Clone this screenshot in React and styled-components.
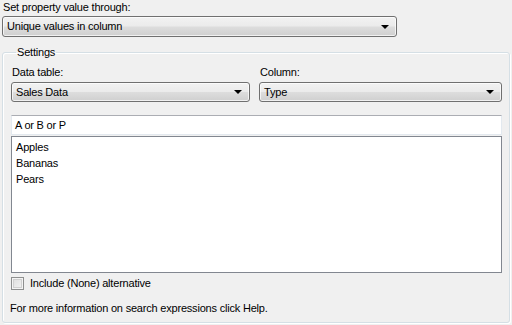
import React from 'react';
import styled, { createGlobalStyle } from 'styled-components';

const GlobalStyle = createGlobalStyle`
  html, body {
    margin: 0;
    padding: 0;
    background: #f0f0f0;
  }
  body {
    font-family: "Liberation Sans", Arial, sans-serif;
    font-size: 11px;
    letter-spacing: -0.2px;
    color: #000;
  }
`;

const Page = styled.div`
  width: 512px;
  height: 325px;
  box-sizing: border-box;
  padding: 1px 2px 0 2px;
  background: #f0f0f0;
  display: flex;
  flex-direction: column;
`;

const Label = styled.div`
  line-height: 13px;
  height: 13px;
  padding-left: ${(p) => p.indent || 1}px;
  white-space: nowrap;
`;

const Combo = styled.div`
  box-sizing: border-box;
  width: ${(p) => p.width || '100%'};
  height: ${(p) => p.height || 20}px;
  margin-top: ${(p) => p.top || 3}px;
  border: 1px solid #707070;
  border-radius: 3px;
  background: linear-gradient(#f2f2f2 0%, #ebebeb 48%, #dddddd 52%, #cfcfcf 100%);
  box-shadow: inset 0 0 0 1px rgba(255, 255, 255, 0.7);
  display: flex;
  align-items: center;
  justify-content: space-between;
  padding: 0 7px 0 4px;
  line-height: 13px;
`;

const Arrow = styled.span`
  width: 0;
  height: 0;
  border-left: 4px solid transparent;
  border-right: 4px solid transparent;
  border-top: 4px solid #000;
`;

const Group = styled.fieldset`
  box-sizing: border-box;
  margin: 9px 0 0 0;
  padding: 7px 7px 0 8px;
  height: 277px;
  border: 1px solid #d5dfe5;
  border-radius: 3px;
  box-shadow: inset 1px 1px 0 #fff, 1px 1px 0 #fff;
  display: flex;
  flex-direction: column;
  min-width: 0;
`;

const Legend = styled.legend`
  padding: 0 1px;
  margin-left: 5px;
  line-height: 13px;
`;

const Row = styled.div`
  display: grid;
  grid-template-columns: 239px 1fr;
  column-gap: 9px;
`;

const Field = styled.div`
  display: flex;
  flex-direction: column;
`;

const TextBox = styled.div`
  box-sizing: border-box;
  height: 20px;
  margin-top: 13px;
  background: #fff;
  border: 1px solid #e3e9ef;
  border-top-color: #abadb3;
  padding: 0 3px;
  display: flex;
  align-items: center;
  line-height: 13px;
`;

const ListBox = styled.div`
  box-sizing: border-box;
  height: 137px;
  margin-top: 1px;
  background: #fff;
  border: 1px solid #828790;
  padding: 2px 3px;
`;

const ListItem = styled.div`
  line-height: 16px;
  height: 16px;
  padding-left: 1px;
`;

const CheckRow = styled.label`
  display: flex;
  align-items: center;
  gap: 6px;
  margin-top: 4px;
  height: 13px;
  line-height: 13px;
`;

const CheckBox = styled.span`
  box-sizing: border-box;
  width: 13px;
  height: 13px;
  border: 1px solid #8e8f8f;
  background: linear-gradient(135deg, #dcdcdc 0%, #f4f4f4 100%);
  box-shadow: inset 0 0 0 1px #f4f4f4, inset 0 0 0 2px #d0d0d0;
`;

const Note = styled.div`
  margin-top: 12px;
  margin-left: -1px;
  line-height: 13px;
`;

export default function App() {
  return (
    <>
      <GlobalStyle />
      <Page>
        <Label>Set property value through:</Label>
        <Combo width="395px" height={21} top={2}>
          <span>Unique values in column</span>
          <Arrow />
        </Combo>
        <Group>
          <Legend>Settings</Legend>
          <Row>
            <Field>
              <Label indent={0}>Data table:</Label>
              <Combo>
                <span>Sales Data</span>
                <Arrow />
              </Combo>
            </Field>
            <Field>
              <Label indent={0}>Column:</Label>
              <Combo>
                <span>Type</span>
                <Arrow />
              </Combo>
            </Field>
          </Row>
          <TextBox>A or B or P</TextBox>
          <ListBox>
            <ListItem>Apples</ListItem>
            <ListItem>Bananas</ListItem>
            <ListItem>Pears</ListItem>
          </ListBox>
          <CheckRow>
            <CheckBox />
            <span>Include (None) alternative</span>
          </CheckRow>
          <Note>For more information on search expressions click Help.</Note>
        </Group>
      </Page>
    </>
  );
}
